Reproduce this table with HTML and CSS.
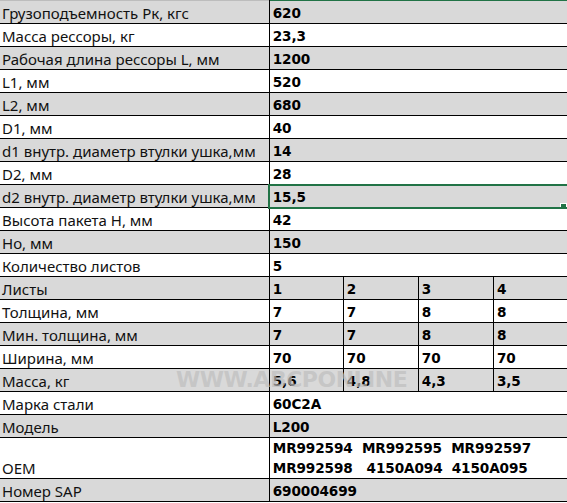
FILE: index.html
```html
<!DOCTYPE html>
<html lang="ru">
<head>
<meta charset="utf-8">
<link rel="stylesheet" href="styles.css">
</head>
<body>
<div class="sheet">
<table class="spec">
<colgroup><col class="c-label"><col class="c-a"><col class="c-b"><col class="c-b"><col class="c-a"></colgroup>
<tr class="g first"><td>Грузоподъемность Рк, кгс</td><td colspan="4" class="v top-sel">620</td></tr>
<tr><td>Масса рессоры, кг</td><td colspan="4" class="v">23,3</td></tr>
<tr class="g"><td>Рабочая длина рессоры L, мм</td><td colspan="4" class="v">1200</td></tr>
<tr><td>L1, мм</td><td colspan="4" class="v">520</td></tr>
<tr class="g"><td>L2, мм</td><td colspan="4" class="v">680</td></tr>
<tr><td>D1, мм</td><td colspan="4" class="v">40</td></tr>
<tr class="g"><td>d1 внутр. диаметр втулки ушка,мм</td><td colspan="4" class="v">14</td></tr>
<tr><td>D2, мм</td><td colspan="4" class="v">28</td></tr>
<tr class="g"><td>d2 внутр. диаметр втулки ушка,мм</td><td colspan="4" class="v sel">15,5<span class="handle"></span></td></tr>
<tr><td>Высота пакета H, мм</td><td colspan="4" class="v">42</td></tr>
<tr class="g"><td>Но, мм</td><td colspan="4" class="v">150</td></tr>
<tr><td>Количество листов</td><td colspan="4" class="v">5</td></tr>
<tr class="g"><td>Листы</td><td class="v">1</td><td class="v">2</td><td class="v">3</td><td class="v">4</td></tr>
<tr><td>Толщина, мм</td><td class="v">7</td><td class="v">7</td><td class="v">8</td><td class="v">8</td></tr>
<tr class="g"><td>Мин. толщина, мм</td><td class="v">7</td><td class="v">7</td><td class="v">8</td><td class="v">8</td></tr>
<tr><td>Ширина, мм</td><td class="v">70</td><td class="v">70</td><td class="v">70</td><td class="v">70</td></tr>
<tr class="g"><td>Масса, кг</td><td class="v">5,6</td><td class="v">4,8</td><td class="v">4,3</td><td class="v">3,5</td></tr>
<tr><td>Марка стали</td><td colspan="4" class="v">60С2А</td></tr>
<tr class="g"><td>Модель</td><td colspan="4" class="v">L200</td></tr>
<tr class="tall"><td>OEM</td><td colspan="4" class="v oem">MR992594&nbsp; MR992595&nbsp; MR992597<br>MR992598&nbsp;&nbsp; 4150A094&nbsp; 4150A095</td></tr>
<tr class="g"><td>Номер SAP</td><td colspan="4" class="v">690004699</td></tr>
</table>
<div class="watermark">WWW.ABCPONLINE</div>
</div>
</body>
</html>
```

FILE: styles.css
```css
html, body {
  margin: 0;
  padding: 0;
  background: #ffffff;
}
.sheet {
  position: relative;
  width: 567px;
  height: 503px;
  overflow: hidden;
}
.spec {
  border-collapse: collapse;
  table-layout: fixed;
  width: 568px;
  font-family: "Noto Sans", sans-serif;
  font-size: 15px;
  color: #111;
}
.c-label { width: 269px; }
.c-a { width: 74px; }
.c-b { width: 75px; }
.spec td {
  height: 21px;
  padding: 0 0 1px 2px;
  border: 1px solid #000;
  border-left: none;
  vertical-align: bottom;
  white-space: nowrap;
  line-height: 18px;
  overflow: hidden;
}
.spec td:first-child {
  border-right: 1px solid #000;
}
.spec tr.first td { border-top: 1px solid #bdbdbd; }
.spec tr.first td.top-sel { border-top: 1px solid #217346; }
.spec tr.g td { background: #d9d9d9; }
.spec td.v {
  font-family: "DejaVu Sans", sans-serif;
  font-weight: bold;
  font-size: 13.6px;
  letter-spacing: -0.1px;
  color: #000;
  padding-left: 3px;
}
.spec tr.tall td { height: 39px; }
.spec td.oem { line-height: 20px; padding-bottom: 0; }
.spec td.sel {
  position: relative;
  outline: 2px solid #217346;
  outline-offset: -1px;
}
.handle {
  position: absolute;
  right: 0;
  bottom: -3px;
  width: 5px;
  height: 5px;
  background: #217346;
  border: 1px solid #fff;
}
.watermark {
  position: absolute;
  left: 176px;
  top: 367px;
  font-family: "DejaVu Sans", sans-serif;
  font-weight: bold;
  font-size: 22px;
  letter-spacing: -0.5px;
  color: rgba(190, 190, 190, 0.7);
  pointer-events: none;
}
```
